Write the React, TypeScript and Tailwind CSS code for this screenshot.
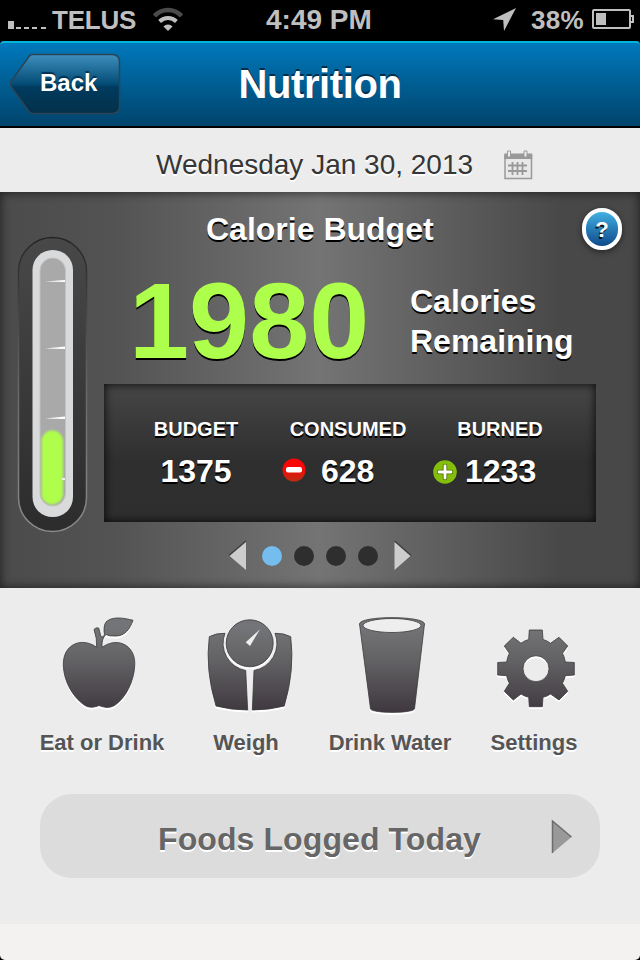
import type { ReactNode } from "react";

const stats = [
  { label: "BUDGET", value: "1375" },
  { label: "CONSUMED", value: "628", icon: "minus" },
  { label: "BURNED", value: "1233", icon: "plus" },
];

function StatusBar() {
  return (
    <div className="flex h-[41px] items-center bg-black pb-px pl-2 font-bold text-[#bfbfbf]">
      <svg width="40" height="40" fill="#bfbfbf">
        <path d="M0 21h6v8H0zM8 27h5v2H8zM16 27h5v2h-5zM24 27h5v2h-5zM33 27h5v2h-5z" />
      </svg>
      <span className="ml-[4px] w-[88px] text-[26px] tracking-[-0.2px]">TELUS</span>
      <svg className="ml-[12px]" width="32" height="40" fill="none">
        <path d="M2.500 16A18 18 0 0 1 29.500 16" stroke="#4b4b4b" strokeWidth="4.500" />
        <path d="M7.600 21.500A12 12 0 0 1 24.400 21.500" stroke="#bfbfbf" strokeWidth="4" />
        <path d="M16 31l-4.600-4.600a6.500 6.500 0 0 1 9.200 0z" fill="#bfbfbf" />
      </svg>
      <span className="ml-[82px] w-[108px] text-[28px] whitespace-nowrap">4:49 PM</span>
      <svg className="ml-[118px]" width="24" height="40" fill="#bfbfbf">
        <path d="M24 8L12 31l-.8-11L1 19.300z" />
      </svg>
      <span className="ml-[15px] w-[54px] text-[26px] tracking-[0.3px]">38%</span>
      <svg className="ml-[6px]" width="44" height="40" fill="none" stroke="#bfbfbf" strokeWidth="2">
        <rect x="2" y="10" width="37" height="18" rx="1" />
        <path d="M39 16h3v6h-3" />
        <path d="M5 13h10v12H5z" fill="#bfbfbf" stroke="none" />
      </svg>
    </div>
  );
}

function NavBar() {
  return (
    <div className="bg-black">
      <div className="grid h-[87px] grid-cols-[1fr_auto_1fr] items-center rounded-t-[4px] border-t-2 border-b-2 border-t-[#00b4dc] border-b-black bg-linear-to-b from-[#0079bc] to-[#00446c] pb-px text-white">
        <button className="relative ml-2 h-[62px] w-[114px] text-left">
          <svg className="absolute inset-0" width="114" height="62">
            <defs>
              <linearGradient id="back" x2="0" y2="1">
                <stop offset="0" stopColor="#3f8fbd" />
                <stop offset=".5" stopColor="#034c76" />
                <stop offset=".55" stopColor="#003b5f" />
                <stop offset="1" stopColor="#04304a" />
              </linearGradient>
            </defs>
            <path
              d="M24 1.500h80q7.500 0 7.500 7.500v44q0 7.500-7.500 7.500h-80q-1.500 0-3-2L3 33.500q-1.500-2.500 0-5L21 3.500q1.500-2 3-2z"
              fill="url(#back)"
              stroke="#2b4456"
              strokeWidth="1.500"
            />
          </svg>
          <span className="relative -top-px ml-8 text-[24px] font-bold [text-shadow:0_-2px_1px_#00304e]">
            Back
          </span>
        </button>
        <h1 className="text-[40px] leading-[60px] font-bold tracking-[-0.4px] [text-shadow:0_-2px_0_#002d4a]">
          Nutrition
        </h1>
      </div>
    </div>
  );
}

function CalendarIcon() {
  return (
    <svg width="29" height="30" fill="none">
      <path d="M1 5v23.500h26.500V5" fill="#e8e8e8" stroke="#999" strokeWidth="1.500" />
      <path d="M.3 3.500h28V9H.3z" fill="#999" />
      <path d="M3.500 1h3v6h-3zM20 1h3v6h-3z" fill="#eee" stroke="#999" />
      <path d="M8.500 12v13M13.500 12v13M18.500 12v13M4 15.500h19M4 21h19" stroke="#999" strokeWidth="1.800" />
    </svg>
  );
}

function DateBar() {
  return (
    <div className="flex h-16 items-center bg-[#ececec] pt-[10px] pl-[156px] text-[28px] text-[#363636]">
      <span className="w-[348px] whitespace-nowrap [text-shadow:0_2px_0_#fff]">
        Wednesday Jan 30, 2013
      </span>
      <CalendarIcon />
    </div>
  );
}

function Gauge() {
  return (
    <svg className="mt-8 shrink-0" width="104" height="320">
      <defs>
        <linearGradient id="well" x2="0" y2="1">
          <stop offset="0" stopColor="#484848" />
          <stop offset="1" stopColor="#2c2c2c" />
        </linearGradient>
        <linearGradient id="rim" x2="0" y2="1">
          <stop offset="0" stopColor="#242424" />
          <stop offset=".5" stopColor="#666" />
          <stop offset="1" stopColor="#8b8b8b" />
        </linearGradient>
        <filter id="soft" x="-20%" y="-10%" width="140%" height="120%">
          <feGaussianBlur stdDeviation=".8" />
        </filter>
      </defs>
      <rect x="18.500" y="13.500" width="68" height="294" rx="34" fill="url(#well)" stroke="url(#rim)" strokeWidth="1.500" />
      <rect x="32.500" y="26" width="40.500" height="267" rx="20" fill="#d9dadc" />
      <rect x="40" y="34" width="25.500" height="248" rx="12.700" fill="#a9a9a9" stroke="#c2c2c2" />
      <path d="M45 57.500l20-1.500v2zM45 124.500l20-2v2.500zM45 194.500l20-2v2.500z" fill="#fff" />
      <rect x="41.500" y="206.500" width="21.500" height="74" rx="10.700" fill="#aefe4c" filter="url(#soft)" />
      <path d="M62 254h3v2h-3z" fill="#eee" />
    </svg>
  );
}

function HelpButton() {
  return (
    <button className="flex h-[42px] w-10 items-center justify-center rounded-full border-4 border-white bg-linear-to-b from-[#43b1e2] to-[#114a8c] text-[22px] font-bold shadow-[0_2px_6px_rgba(0,0,0,.5)] [text-shadow:-1px_2px_0_#111]">
      ?
    </button>
  );
}

function StatIcon({ kind }: { kind: string }) {
  if (kind === "minus") {
    return (
      <svg className="-mt-[2px] ml-[10px] mr-[15px]" width="24" height="24">
        <defs>
          <linearGradient id="red" x2="0" y2="1">
            <stop offset=".4" stopColor="#fb0606" />
            <stop offset="1" stopColor="#b83010" />
          </linearGradient>
        </defs>
        <circle cx="12" cy="12" r="11.500" fill="url(#red)" />
        <rect x="4" y="9" width="16" height="5.500" rx="2" fill="#fff" />
      </svg>
    );
  }
  return (
    <svg className="mt-[2px] ml-[9px] mr-[8px]" width="24" height="24">
      <circle cx="12" cy="12" r="11.800" fill="#84bd0c" />
      <path d="M12 6v12M6 12h12" stroke="#4d7005" strokeWidth="4.500" strokeLinecap="round" />
      <path d="M12 6v12M6 12h12" stroke="#fff" strokeWidth="2.800" strokeLinecap="round" />
    </svg>
  );
}

function Stats() {
  return (
    <div className="flex h-[138px] w-[492px] bg-[linear-gradient(#464646,#2f2f2f_55%,#2e2e2e)] pt-[31px] pl-4 shadow-[inset_0_0_9px_1px_rgba(0,0,0,.75)] [text-shadow:0_2px_0_#000]">
      {stats.map((s) => (
        <div key={s.label} className="w-[152px] font-bold">
          <div className="text-center text-[20px] leading-[28px]">{s.label}</div>
          <div
            className={
              s.icon
                ? "flex items-center text-[32px] leading-[56px]"
                : "text-center text-[32px] leading-[56px]"
            }
          >
            {s.icon && <StatIcon kind={s.icon} />}
            {s.value}
          </div>
        </div>
      ))}
    </div>
  );
}

function Pager() {
  return (
    <div className="mt-[18px] ml-[124px] flex h-8 items-center gap-3">
      <svg className="mr-[3px]" width="19" height="32">
        <path d="M18 1v29L1 15.500z" fill="#cdcdcd" />
        <path d="M18 1L1 15.500" stroke="#3e3e3e" strokeWidth="1.500" />
      </svg>
      <span className="h-5 w-5 rounded-full bg-[#74bdee]" />
      <span className="h-5 w-5 rounded-full bg-[#2e2e2e]" />
      <span className="h-5 w-5 rounded-full bg-[#2e2e2e]" />
      <span className="h-5 w-5 rounded-full bg-[#2e2e2e]" />
      <svg className="ml-[3px]" width="19" height="32">
        <path d="M1.500 1v29L18 15.500z" fill="#cdcdcd" />
        <path d="M1.500 1L18 15.500" stroke="#3e3e3e" strokeWidth="1.500" />
      </svg>
    </div>
  );
}

function BudgetPanel() {
  return (
    <div className="flex h-[396px] bg-[linear-gradient(90deg,#4b4b4b,#535353_18%,#747474_50%,#484848_88%)] text-white shadow-[inset_0_0_10px_1px_rgba(0,0,0,.55)]">
      <Gauge />
      <div className="pt-[17px]">
        <div className="flex h-10 items-center justify-between">
          <h2 className="ml-[102px] text-[32px] leading-10 font-bold [text-shadow:0_2px_0_#000]">
            Calorie Budget
          </h2>
          <HelpButton />
        </div>
        <div className="flex h-[135px] w-[518px] items-center pt-[9px] pl-[25px] font-bold">
          <span className="w-[281px] text-[108px] leading-[120px] text-[#aefe4c] [text-shadow:0_2px_0_#000]">
            1980
          </span>
          <span className="text-[32px] leading-10 [text-shadow:0_2px_0_#000]">
            Calories
            <br />
            Remaining
          </span>
        </div>
        <Stats />
        <Pager />
      </div>
    </div>
  );
}

function Action({ label, children }: { label: string; children: ReactNode }) {
  return (
    <button className="flex w-36 flex-col items-center text-[22px] leading-[28px] font-bold text-[#555]">
      <svg
        className="drop-shadow-[0_2px_0_#fff]"
        width="100"
        height="121"
        fill="url(#metal)"
        stroke="#38373a"
        strokeWidth=".8"
      >
        {children}
      </svg>
      <span className="whitespace-nowrap [text-shadow:0_2px_0_#fff]">{label}</span>
    </button>
  );
}

function Actions() {
  return (
    <div className="h-[206px]">
      <svg className="absolute" width="0" height="0">
        <defs>
          <linearGradient id="metal" gradientUnits="userSpaceOnUse" x1="0" y1="20" x2="0" y2="102">
            <stop offset="0" stopColor="#737477" />
            <stop offset=".4" stopColor="#626164" />
            <stop offset="1" stopColor="#403a40" />
          </linearGradient>
        </defs>
      </svg>
      <div className="flex pt-5 pl-[30px]">
        <Action label="Eat or Drink">
          <path d="M44.700 39.300Q45 30 42 21.500q2-2.500 4.700-1.500l2 7.500q1 3.500 3.800-.8C51.500 22 52 16 54.500 13.500C61 8 72 10 81 12.300C78 21 73 28 64 28q-7 .5-10-1.500q-4.500 4-4 12.800C57 34.500 64 33.500 70 35.500C80 39 83.500 49 82.700 58C82 73 74 90 62.500 97.500C57 100.500 52 99.500 47 97.500C42 99.500 37 100.500 31.500 96.500C20 88 12 73 11.300 58C11 47 15 39 24 35.500C31 33 39 35 44.700 39.300z" />
        </Action>
        <Action label="Weigh">
          <path d="M29 25.300Q20 25 13.300 28.700Q9 62 20 98Q35 102 51.700 102L49.700 62.500A27.500 27.500 0 0 1 29 25.300z" />
          <path d="M79 25.300Q88 25 94.700 28.700Q99 62 88.300 98Q73 102 56.300 102L58 62.500A27.500 27.500 0 0 0 79 25.300z" />
          <circle cx="53.700" cy="35.300" r="23.500" />
          <path d="M64 21.300L49.700 34.300L54 38z" fill="#eee" stroke="none" />
        </Action>
        <Action label="Drink Water">
          <path d="M19.500 16c0-8.500 65-8.500 65 0L74.500 101c-3 4.500-41 4.500-44 0z" />
          <ellipse cx="52" cy="17.500" rx="29" ry="7" fill="#eee" />
        </Action>
        <Action label="Settings">
          <path
            fillRule="evenodd"
            d="M45.300 22h13l.7 9.500q4 1 7.500 3.800l8.500-6l8.700 8.700l-5.200 7.300q2.200 4 2.800 8.700l9 .5V67l-9 .7q-.8 4-2.800 7.600l5.200 8L75 92l-8.500-6q-3.500 2.500-7.500 3.300l-.7 9.400h-13l-.6-9.400q-4-.8-7.700-3.300l-7.700 6l-9-8.700l5-8q-2-3.600-2.600-7.600l-9-.7V54.500l9-.5q.6-4.700 2.600-8.700l-5-7.300l9-8.700l7.700 6q3.700-2.800 7.700-3.800zM52 47.700a13 13 0 1 0 0 26a13 13 0 0 0 0-26z"
          />
        </Action>
      </div>
    </div>
  );
}

export default function App() {
  return (
    <div className="h-[960px] w-[640px] overflow-hidden bg-black font-['Liberation_Sans',Arial,sans-serif]">
      <StatusBar />
      <NavBar />
      <DateBar />
      <BudgetPanel />
      <div className="h-[336px] bg-[#ececec]">
        <Actions />
        <button className="mx-10 flex h-[84px] w-[560px] items-center rounded-[32px] bg-[#dcdcdc] pl-[118px] text-[32px] font-bold text-[#666]">
          <span className="w-[393px] pt-[6px] text-left tracking-[0.1px] [text-shadow:0_2px_0_#fff]">
            Foods Logged Today
          </span>
          <svg className="mt-[2px]" width="22" height="36">
            <path d="M1.500 2v32L20.500 18z" fill="#999" />
            <path d="M1.500 34V2l19 16" fill="none" stroke="#6c6c6c" strokeWidth="1.500" />
          </svg>
        </button>
      </div>
      <div className="h-9 rounded-b-[5px] bg-[#f3f2f0]" />
    </div>
  );
}
